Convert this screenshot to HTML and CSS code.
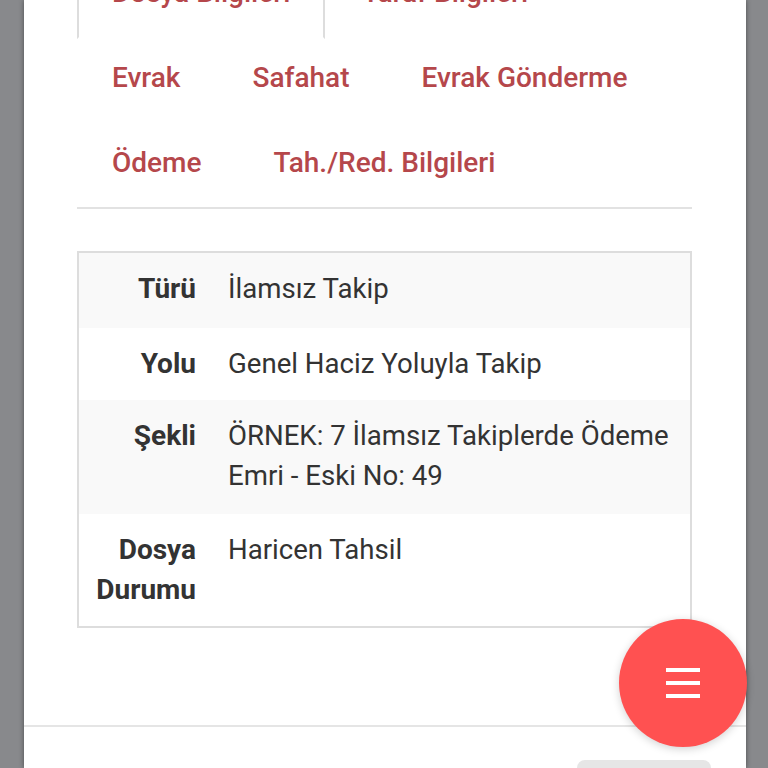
FILE: index.html
```html
<!DOCTYPE html>
<html lang="tr">
<head>
<meta charset="utf-8">
<title>Dosya Bilgileri</title>
<link rel="stylesheet" href="styles.css">
</head>
<body>
<div class="modal">
  <div class="modal-body">
    <ul class="tabs">
      <li class="tab active"><a>Dosya Bilgileri</a></li>
      <li class="tab"><a>Taraf Bilgileri</a></li>
      <li class="tab"><a>Evrak</a></li>
      <li class="tab"><a>Safahat</a></li>
      <li class="tab"><a>Evrak Gönderme</a></li>
      <li class="tab"><a>Ödeme</a></li>
      <li class="tab"><a>Tah./Red. Bilgileri</a></li>
    </ul>
    <table class="info">
      <tr class="odd first"><th>Türü</th><td>İlamsız Takip</td></tr>
      <tr><th>Yolu</th><td>Genel Haciz Yoluyla Takip</td></tr>
      <tr class="odd third"><th>Şekli</th><td>ÖRNEK: 7 İlamsız Takiplerde Ödeme Emri - Eski No: 49</td></tr>
      <tr><th>Dosya Durumu</th><td>Haricen Tahsil</td></tr>
    </table>
  </div>
  <div class="modal-footer">
    <button class="btn">Kapat</button>
  </div>
</div>
<button class="fab" aria-label="Menü">
  <span class="bar"></span><span class="bar"></span><span class="bar"></span>
</button>
</body>
</html>
```
FILE: styles.css
```css
html, body {
  margin: 0;
  padding: 0;
  height: 768px;
  overflow: hidden;
}
body {
  background: #88898c;
  font-family: Roboto, "Noto Sans", "Liberation Sans", sans-serif;
  color: #333;
  padding: 0 22px 0 24px;
  box-sizing: border-box;
}
.modal {
  background: #fff;
  height: 100%;
  box-shadow: 0 0 5px rgba(0, 0, 0, 0.45);
  display: flex;
  flex-direction: column;
}
.modal-body {
  margin-top: -48px;
  padding: 0 54px 0 53px;
}
.tabs {
  list-style: none;
  margin: 0;
  padding: 0;
  display: flex;
  flex-wrap: wrap;
  border-bottom: 2px solid #e2e2e2;
}
.tab {
  margin: 0 2px -2px 0;
}
.tab a {
  display: block;
  padding: 18px 33px 24px;
  border: 2px solid transparent;
  border-radius: 8px 8px 0 0;
  font-size: 28px;
  line-height: 41px;
  font-weight: 500;
  color: #b5474b;
}
.tab.active a {
  border-color: #ddd #ddd transparent #ddd;
  background: #fff;
}
.info {
  width: 100%;
  margin-top: 42px;
  border-collapse: collapse;
  border: 2px solid #ddd;
  font-size: 27.6px;
  line-height: 40px;
}
.info th, .info td {
  padding: 16px 16px;
  vertical-align: top;
}
.info tr.first th, .info tr.first td {
  padding-bottom: 19px;
}
.info tr.third th, .info tr.third td {
  padding-bottom: 18px;
}
.info th {
  width: 101px;
  text-align: right;
  font-weight: 700;
  font-size: 28px;
}
.info td {
  text-align: left;
  font-weight: 400;
}
.info tr.odd {
  background: #f9f9f9;
}
.modal-footer {
  margin-top: 97px;
  border-top: 2px solid #e5e5e5;
  padding: 33px 35px 0;
  display: flex;
  justify-content: flex-end;
}
.btn {
  width: 134px;
  height: 70px;
  border: none;
  border-radius: 8px;
  background: #e6e6e6;
  font-family: inherit;
  font-size: 28px;
  color: #333;
}
.fab {
  position: fixed;
  left: 619px;
  top: 619px;
  width: 128px;
  height: 128px;
  border: none;
  border-radius: 50%;
  background: #ff5151;
  box-shadow: 0 2px 8px rgba(0, 0, 0, 0.18);
  display: flex;
  flex-direction: column;
  align-items: center;
  justify-content: center;
  gap: 9px;
  padding: 0;
}
.bar {
  display: block;
  width: 34px;
  height: 4px;
  background: #fff;
}
```
